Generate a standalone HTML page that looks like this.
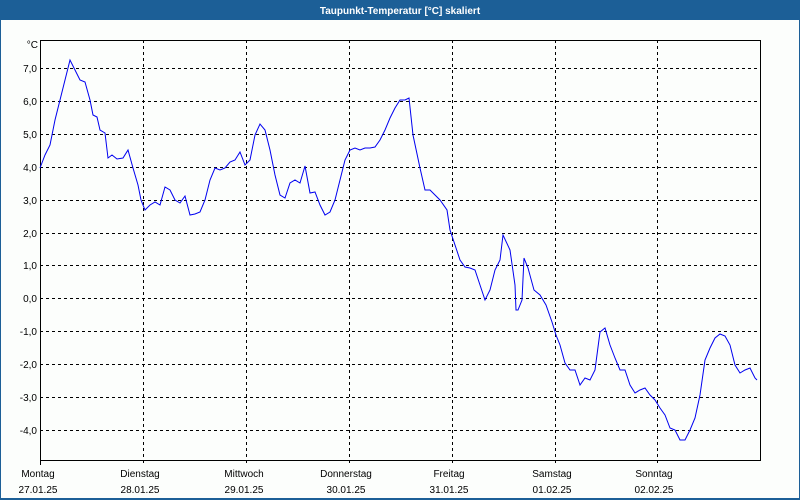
<!DOCTYPE html>
<html><head><meta charset="utf-8"><style>
html,body{margin:0;padding:0;width:800px;height:500px;overflow:hidden;background:#fcfefc;font-family:Tahoma,"Liberation Sans","DejaVu Sans",sans-serif}
</style></head><body>
<svg width="800" height="500" xmlns="http://www.w3.org/2000/svg" style="display:block">
<rect x="0" y="0" width="800" height="500" fill="#fcfefc"/>
<rect x="0" y="0" width="800" height="20" fill="#1c5f97"/>
<rect x="0" y="20" width="1" height="480" fill="#1c5f97"/>
<rect x="799" y="20" width="1" height="480" fill="#1c5f97"/>
<rect x="0" y="498" width="800" height="2" fill="#1c5f97"/>
<text x="400" y="14" fill="#fff" font-size="10" font-weight="bold" text-anchor="middle" font-family="Liberation Sans, sans-serif">Taupunkt-Temperatur [°C] skaliert</text>
<g stroke="#000" stroke-width="1" stroke-dasharray="3,3" fill="none">
<path d="M40 68.5H760M40 101.5H760M40 134.5H760M40 167.5H760M40 200.5H760M40 233.5H760M40 265.5H760M40 298.5H760M40 331.5H760M40 364.5H760M40 397.5H760M40 430.5H760"/>
<path d="M143.5 40V465M246.5 40V465M349.5 40V465M452.5 40V465M555.5 40V465M657.5 40V465"/>
</g>
<rect x="40.5" y="40.5" width="720" height="420" fill="none" stroke="#000" stroke-width="1"/>
<path d="M40.5 460V465" stroke="#000"/>
<g font-size="10" font-family="Liberation Sans, sans-serif" fill="#000" text-anchor="end">
<text x="38" y="48">°C</text>
<text x="37" y="72">7,0</text><text x="37" y="105">6,0</text><text x="37" y="138">5,0</text><text x="37" y="171">4,0</text>
<text x="37" y="204">3,0</text><text x="37" y="237">2,0</text><text x="37" y="269">1,0</text><text x="37" y="302">0,0</text>
<text x="37" y="335">-1,0</text><text x="37" y="368">-2,0</text><text x="37" y="401">-3,0</text><text x="37" y="434">-4,0</text>
</g>
<g font-size="10" font-family="Liberation Sans, sans-serif" fill="#000" text-anchor="middle">
<text x="38" y="477">Montag</text><text x="38" y="493">27.01.25</text>
<text x="140" y="477">Dienstag</text><text x="140" y="493">28.01.25</text>
<text x="244" y="477">Mittwoch</text><text x="244" y="493">29.01.25</text>
<text x="346" y="477">Donnerstag</text><text x="346" y="493">30.01.25</text>
<text x="449" y="477">Freitag</text><text x="449" y="493">31.01.25</text>
<text x="552" y="477">Samstag</text><text x="552" y="493">01.02.25</text>
<text x="654" y="477">Sonntag</text><text x="654" y="493">02.02.25</text>
</g>
<polyline fill="none" stroke="#0000f0" stroke-width="1" points="40,168 45,155 50,145 55,120 60,100 65,80 70,60 75,70 80,80 85,82 90,100 93,115 97,117 100,130 105,133 108,158 112,155 117,159 123,158 128,150 133,168 138,185 141,200 145,210 150,205 155,202 160,205 165,187 170,190 175,200 180,203 185,196 190,215 195,214 200,212 205,200 210,180 215,168 220,170 225,168 230,162 235,160 240,152 245,165 250,160 255,135 260,124 265,130 270,150 275,175 280,195 285,198 290,183 295,180 300,183 305,166 310,193 315,192 320,205 325,215 330,212 335,200 340,180 345,160 350,150 355,148 360,150 365,148 370,148 375,147 380,140 385,130 390,118 395,108 400,100 405,100 409,98 413,135 420,168 425,190 430,190 440,200 447,210 450,230 455,245 460,260 465,267 470,268 475,270 480,285 485,300 490,290 495,270 500,260 503,235 510,250 515,285 516,310 518,310 522,300 524,258 528,268 534,290 540,295 546,305 552,322 556,335 560,345 565,363 570,370 575,370 580,385 585,378 590,380 595,370 600,332 605,328 610,345 615,358 620,370 625,370 630,385 635,393 640,390 645,388 650,395 655,400 660,408 665,415 670,428 675,430 680,440 685,440 690,430 695,418 700,395 705,360 710,348 715,338 720,334 725,336 730,345 735,365 740,373 745,370 750,368 755,378 757,380"/>
</svg>
</body></html>
